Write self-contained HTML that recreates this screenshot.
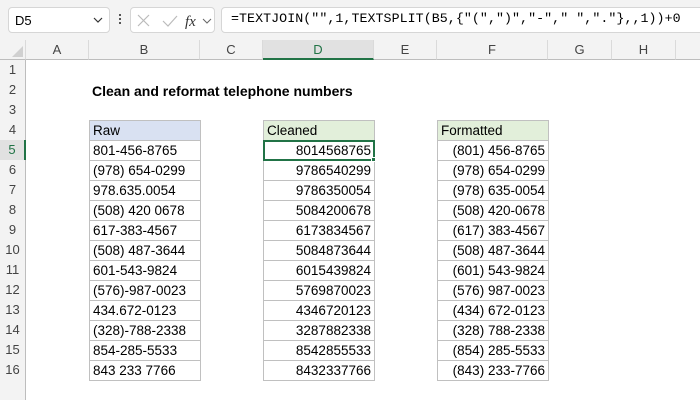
<!DOCTYPE html>
<html><head><style>
*{margin:0;padding:0;box-sizing:border-box}
body{width:700px;height:400px;background:#fff;position:relative;overflow:hidden;font-family:"Liberation Sans",sans-serif;font-size:13.5px;color:#000}
.a{position:absolute}
.top{left:0;top:0;width:700px;height:40px;background:#f3f3f3}
.box{background:#fff;border:1px solid #d6d6d6;border-radius:4px}
.hdr{top:40px;height:20px;background:#f3f3f3;border-bottom:1px solid #bdbdbd;border-right:1px solid #dadada;text-align:center;line-height:20px;color:#444;font-size:13px}
.rn{left:0;width:26px;height:20px;background:#f3f3f3;border-right:1px solid #bdbdbd;text-align:center;line-height:20px;color:#444;font-size:13px}
.c{height:21px;border:1px solid #c0c0c0;line-height:19px;padding:0 3px;white-space:nowrap}
.r{text-align:right}
</style></head><body>
<div class="a top"></div>
<div class="a box" style="left:8px;top:7px;width:102px;height:26px"></div>
<div class="a" style="left:15px;top:13px;font-size:13px">D5</div>
<svg class="a" style="left:93px;top:16px" width="10" height="8"><path d="M1 2 L5 6 L9 2" stroke="#333" stroke-width="1.2" fill="none"/></svg>
<div class="a" style="left:119px;top:14px;width:2px;height:2px;background:#555;box-shadow:0 4px #555,0 8px #555"></div>
<div class="a box" style="left:130px;top:7px;width:85px;height:26px"></div>
<svg class="a" style="left:136px;top:13px" width="80" height="16"><path d="M2 2 L13 13 M13 2 L2 13" stroke="#bbb" stroke-width="1.2"/><path d="M27 8 L32 13 L41 3" stroke="#bbb" stroke-width="1.2" fill="none"/><text x="49" y="13" font-family="Liberation Serif" font-style="italic" font-size="15" fill="#333">fx</text><path d="M67 6 L71 10 L75 6" stroke="#666" stroke-width="1" fill="none"/></svg>
<div class="a box" style="left:221px;top:7px;width:490px;height:26px"></div>
<div class="a" style="left:231px;top:11px;font-family:'Liberation Mono',monospace;font-size:13.3px;letter-spacing:0.05px">=TEXTJOIN("",1,TEXTSPLIT(B5,{"(",")","-"," ","."},,1))+0</div>

<div class="a hdr" style="left:0;width:26px;background:#f3f3f3"></div>
<svg class="a" style="left:12px;top:46px" width="12" height="12"><path d="M11 0 L11 11 L0 11 Z" fill="#d0d0d0"/></svg>
<div class="a hdr" style="left:26px;width:63px">A</div>
<div class="a hdr" style="left:89px;width:111px">B</div>
<div class="a hdr" style="left:200px;width:63px">C</div>
<div class="a hdr" style="left:263px;width:111px;background:#e1e1e1;border-bottom:2px solid #217346;color:#217346">D</div>
<div class="a hdr" style="left:374px;width:63px">E</div>
<div class="a hdr" style="left:437px;width:111px">F</div>
<div class="a hdr" style="left:548px;width:64px">G</div>
<div class="a hdr" style="left:612px;width:64px">H</div>
<div class="a hdr" style="left:676px;width:30px"></div>

<div class="a rn" style="top:60px">1</div>
<div class="a rn" style="top:80px">2</div>
<div class="a rn" style="top:100px">3</div>
<div class="a rn" style="top:120px">4</div>
<div class="a rn" style="top:140px;background:#e1e1e1;color:#217346;border-right:2px solid #217346">5</div>
<div class="a rn" style="top:160px">6</div>
<div class="a rn" style="top:180px">7</div>
<div class="a rn" style="top:200px">8</div>
<div class="a rn" style="top:220px">9</div>
<div class="a rn" style="top:240px">10</div>
<div class="a rn" style="top:260px">11</div>
<div class="a rn" style="top:280px">12</div>
<div class="a rn" style="top:300px">13</div>
<div class="a rn" style="top:320px">14</div>
<div class="a rn" style="top:340px">15</div>
<div class="a rn" style="top:360px">16</div>
<div class="a rn" style="top:380px;height:20px"></div>

<div class="a" style="left:92px;top:83px;font-weight:bold;font-size:14px">Clean and reformat telephone numbers</div>

<div id="t"></div>
<script>
var raw=["801-456-8765","(978) 654-0299","978.635.0054","(508) 420 0678","617-383-4567","(508) 487-3644","601-543-9824","(576)-987-0023","434.672-0123","(328)-788-2338","854-285-5533","843 233 7766"];
var h='';
function cell(x,y,txt,cls,bg){h+='<div class="a c '+cls+'" style="left:'+x+'px;top:'+y+'px;width:112px;'+(bg?'background:'+bg+';':'')+'">'+txt+'</div>';}
cell(89,120,'Raw','','#d9e1f2');cell(263,120,'Cleaned','','#e2efda');cell(437,120,'Formatted','','#e2efda');
raw.forEach(function(r,i){var d=r.replace(/\D/g,'');var y=140+i*20;
cell(89,y,r,'');cell(263,y,d,'r');cell(437,y,'('+d.slice(0,3)+') '+d.slice(3,6)+'-'+d.slice(6),'r');});
h+='<div class="a" style="left:263px;top:140px;width:112px;height:21px;border:2px solid #217346"></div><div class="a" style="left:371px;top:157px;width:5px;height:5px;background:#217346;border:1px solid #fff"></div>';
document.getElementById('t').innerHTML=h;
</script>
</body></html>
